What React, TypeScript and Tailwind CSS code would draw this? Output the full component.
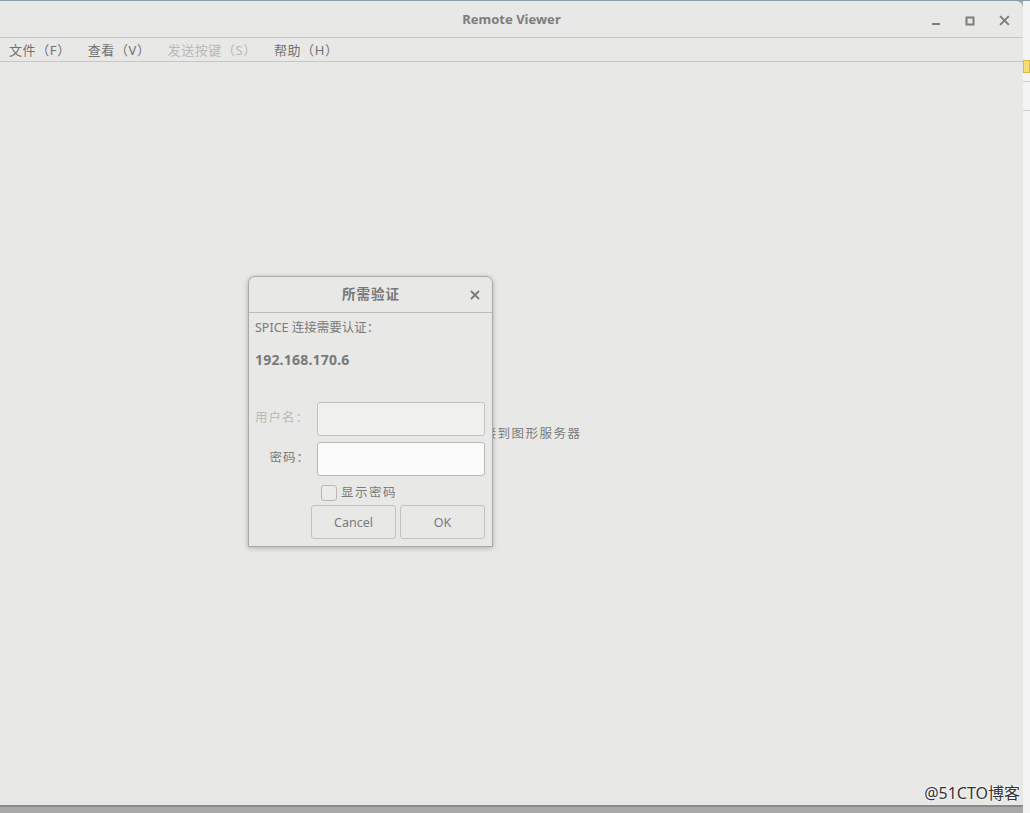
import React from "react";

const font = { fontFamily: '"Noto Sans", "Noto Sans CJK SC", sans-serif' };

function WindowControls() {
  return (
    <div className="absolute right-[13px] top-[1px] flex h-[37px] items-center gap-[24px] text-[#7d7d7d]">
      <svg width="10" height="10" viewBox="0 0 10 10">
        <rect x="1" y="7" width="8" height="2" fill="currentColor" />
      </svg>
      <svg width="10" height="10" viewBox="0 0 10 10">
        <rect x="1.5" y="1.5" width="7" height="7" fill="none" stroke="currentColor" strokeWidth="2" />
      </svg>
      <svg width="11" height="11" viewBox="0 0 10 10">
        <path d="M1 1 L9 9 M9 1 L1 9" stroke="currentColor" strokeWidth="1.8" />
      </svg>
    </div>
  );
}

function MenuBar() {
  const items = [
    { label: "文件（F）", disabled: false },
    { label: "查看（V）", disabled: false },
    { label: "发送按键（S）", disabled: true },
    { label: "帮助（H）", disabled: false },
  ];
  return (
    <div className="flex h-[24px] items-center gap-[17px] border-b border-[#c6c6c4] px-[9px] pt-[2px] text-[13px] tracking-[0.6px]">
      {items.map((item) => (
        <span
          key={item.label}
          className={item.disabled ? "text-[#b9b9b7]" : "text-[#727272]"}
        >
          {item.label}
        </span>
      ))}
    </div>
  );
}

function AuthDialog() {
  return (
    <div className="absolute left-[248px] top-[214px] flex h-[271px] w-[245px] flex-col rounded-t-[7px] border border-[#a9a9a7] bg-[#e8e8e6] shadow-[0_1px_5px_rgba(0,0,0,0.25)]">
      <div className="relative flex h-[36px] items-center justify-center border-b border-[#bdbdbb]">
        <span className="pl-[1px] text-[13.5px] font-bold tracking-[1px] text-[#787878]">所需验证</span>
        <svg
          className="absolute right-[12px] top-[13px] text-[#7a7a7a]"
          width="10"
          height="10"
          viewBox="0 0 10 10"
        >
          <path d="M1 1 L9 9 M9 1 L1 9" stroke="currentColor" strokeWidth="1.8" />
        </svg>
      </div>
      <div className="flex flex-1 flex-col px-[6px]">
        <div className="mt-[6px] text-[12.5px] text-[#7a7a7a]">SPICE 连接需要认证：</div>
        <div className="mt-[11px] text-[14px] font-bold tracking-[0.2px] text-[#7a7a7a]">192.168.170.6</div>
        <div className="mt-[32px] flex items-center">
          <span className="w-[62px] text-[12.5px] tracking-[1px] text-[#b9b9b7]">用户名：</span>
          <div className="h-[34px] w-[168px] rounded-[3px] border border-[#c2c2c0] bg-[#f0f0ef]" />
        </div>
        <div className="mt-[6px] flex items-center">
          <span className="w-[62px] pr-[7px] text-right text-[12.5px] tracking-[1px] text-[#7a7a7a]">密码：</span>
          <div className="h-[34px] w-[168px] rounded-[3px] border border-[#b8b8b6] bg-[#fbfbfb]" />
        </div>
        <div className="mt-[8px] flex items-center pl-[66px]">
          <div className="h-[16px] w-[16px] rounded-[3px] border border-[#b8b8b6] bg-[#ebebea]" />
          <span className="ml-[4px] text-[12.5px] tracking-[1.5px] text-[#7a7a7a]">显示密码</span>
        </div>
        <div className="mt-[2px] flex justify-end gap-[4px] pr-[1px]">
          <button className="h-[34px] w-[85px] rounded-[3px] border border-[#c2c2c0] bg-[#e8e8e6] pt-[3px] text-[12.5px] text-[#7a7a7a]">
            Cancel
          </button>
          <button className="h-[34px] w-[85px] rounded-[3px] border border-[#c2c2c0] bg-[#e8e8e6] pt-[3px] text-[12.5px] text-[#7a7a7a]">
            OK
          </button>
        </div>
      </div>
    </div>
  );
}

export default function App() {
  return (
    <div className="flex h-[813px] w-[1030px] flex-col overflow-hidden bg-[#a8a8a8]" style={font}>
      <div className="h-[1px] bg-[#8d9aa8]" />
      <div className="flex flex-1">
        <div className="flex h-[806px] w-[1023px] flex-col rounded-tr-[7px] border-b-2 border-[#8a8a8a] bg-[#e8e8e6]">
          <div className="relative flex h-[37px] items-center justify-center border-b border-[#c6c6c4] pt-[2px]">
            <span className="text-[13px] font-bold text-[#7d7d7d]">Remote Viewer</span>
            <WindowControls />
          </div>
          <MenuBar />
          <div className="relative flex flex-1 items-center justify-center pt-[2px]">
            <span className="tracking-[1.5px] text-[12.5px] text-[#7a7a7a]">正在连接到图形服务器</span>
            <AuthDialog />
            <span className="absolute bottom-[0px] right-[3px] text-[16px] text-[#333] [text-shadow:0_0_2px_#fff,0_0_2px_#fff]">
              @51CTO博客
            </span>
          </div>
        </div>
        <div className="flex w-[7px] flex-col bg-[#f4f4f4]">
          <div className="mt-[59px] h-[13px] border border-[#d9b948] bg-[#f2dd74]" />
          <div className="mt-[8px] h-[1px] bg-[#cfcfcf]" />
          <div className="mt-[28px] h-[1px] bg-[#cfcfcf]" />
        </div>
      </div>
    </div>
  );
}
